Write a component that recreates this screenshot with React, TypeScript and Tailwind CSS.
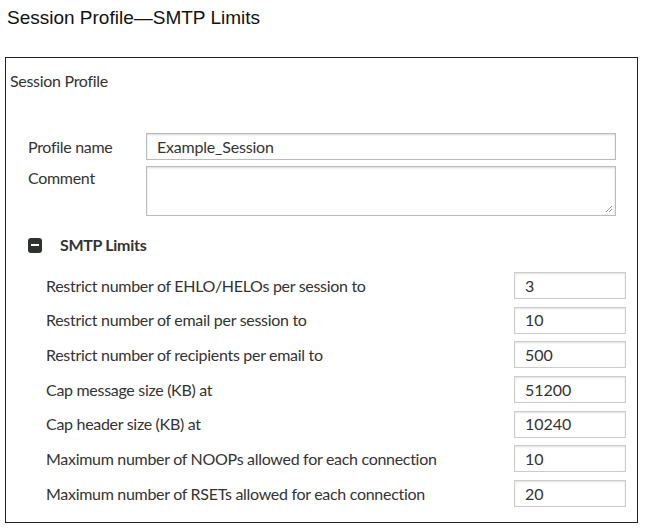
const rows: [string, string][] = [
  ["Restrict number of EHLO/HELOs per session to", "3"],
  ["Restrict number of email per session to", "10"],
  ["Restrict number of recipients per email to", "500"],
  ["Cap message size (KB) at", "51200"],
  ["Cap header size (KB) at", "10240"],
  ["Maximum number of NOOPs allowed for each connection", "10"],
  ["Maximum number of RSETs allowed for each connection", "20"],
]

export default function App() {
  return (
    <div className="w-[649px] h-[530px] bg-white text-[#222] overflow-hidden">
      <h1 className="pl-[7px] pt-[5px] text-[19px] leading-[26px] text-[#111] font-[family-name:Liberation_Sans,Arial,sans-serif]">
        Session Profile—SMTP Limits
      </h1>
      <div className="mt-[26px] ml-[5px] w-[633px] h-[466px] border-[1.5px] border-[#222] font-[family-name:Lato,sans-serif] text-[16px] text-[#333]">
        <div className="pl-[4px] pt-[12px] text-[16px] leading-[22px] tracking-[-0.3px]">Session Profile</div>
        <div className="mt-[41px] pl-[22px] flex flex-col gap-[6px]">
          <div className="flex items-center">
            <div className="w-[118px] tracking-[-0.3px]">Profile name</div>
            <div className="w-[470px] h-[27px] border border-[#bbb] shadow-[inset_0_1px_2px_rgba(0,0,0,0.15)] pl-[10px] flex items-center tracking-[-0.2px]">
              Example_Session
            </div>
          </div>
          <div className="flex items-start">
            <div className="w-[118px] tracking-[-0.3px]">Comment</div>
            <div className="relative w-[470px] h-[50px] border border-[#bbb] shadow-[inset_0_1px_2px_rgba(0,0,0,0.15)]">
              <svg className="absolute right-[2px] bottom-[2px]" width="8" height="8" viewBox="0 0 8 8">
                <path d="M7 1L1 7M7 4L4 7" stroke="#999" strokeWidth="1" />
              </svg>
            </div>
          </div>
        </div>
        <div className="mt-[17px] pl-[22px] flex items-center gap-[18px]">
          <div className="w-[14px] h-[15px] rounded-[3px] bg-[#2f3330] flex items-center justify-center">
            <div className="w-[8px] h-[2px] bg-white" />
          </div>
          <div className="font-bold tracking-[-0.3px]">SMTP Limits</div>
        </div>
        <div className="mt-[15px] pl-[40px] flex flex-col gap-[7.7px]">
          {rows.map(([label, value]) => (
            <div key={label} className="flex items-center h-[27px]">
              <div className="w-[468px] tracking-[-0.3px]">{label}</div>
              <div className="w-[112px] h-[27px] border border-[#ccc] shadow-[inset_0_1px_2px_rgba(0,0,0,0.12)] pl-[10px] flex items-center">
                {value}
              </div>
            </div>
          ))}
        </div>
      </div>
    </div>
  )
}
